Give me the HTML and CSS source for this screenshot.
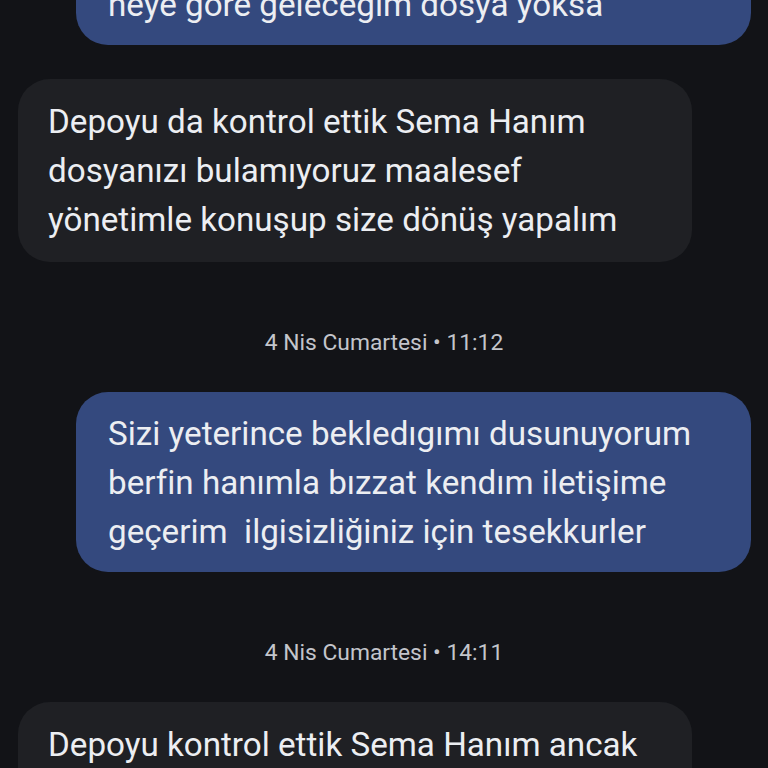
FILE: index.html
```html
<!DOCTYPE html>
<html lang="tr">
<head>
<meta charset="utf-8">
<link rel="stylesheet" href="styles.css">
</head>
<body>
<main class="thread">
  <div class="msg sent top-cut">
    <p class="bubble">neye göre geleceğim dosya yoksa</p>
  </div>
  <div class="msg received">
    <p class="bubble">Depoyu da kontrol ettik Sema Hanım<br>dosyanızı bulamıyoruz maalesef<br>yönetimle konuşup size dönüş yapalım</p>
  </div>
  <div class="stamp">4 Nis Cumartesi • 11:12</div>
  <div class="msg sent">
    <p class="bubble">Sizi yeterince bekledıgımı dusunuyorum<br>berfin hanımla bızzat kendım iletişime<br>geçerim&nbsp; ilgisizliğiniz için tesekkurler</p>
  </div>
  <div class="stamp">4 Nis Cumartesi • 14:11</div>
  <div class="msg received">
    <p class="bubble">Depoyu kontrol ettik Sema Hanım ancak<br>dosyanızı bulamadık</p>
  </div>
</main>
</body>
</html>
```

FILE: styles.css
```css
html, body {
  margin: 0;
  padding: 0;
  background: #121317;
  overflow: hidden;
  height: 768px;
}

.thread {
  display: flex;
  flex-direction: column;
  font-family: Roboto, "Noto Sans", "Liberation Sans", sans-serif;
  color: #eceef2;
  margin-top: -37px;
}

.msg {
  display: flex;
}

.msg.sent {
  justify-content: flex-end;
  padding-right: 17px;
}

.msg.received {
  justify-content: flex-start;
  padding-left: 18px;
}

.top-cut + .msg.received {
  margin-top: 34px;
}

.bubble {
  margin: 0;
  font-size: 33.2px;
  line-height: 49px;
  border-radius: 32px;
  white-space: nowrap;
}

.sent .bubble {
  background: #34497e;
  width: 611px;
  padding: 17px 32px 16px 32px;
}

.received .bubble {
  background: #1f2024;
  width: 614px;
  padding: 18px 30px 18px 30px;
}

.stamp {
  text-align: center;
  font-size: 22.8px;
  line-height: 28px;
  color: #c3c5cb;
  margin-top: 67px;
  margin-bottom: 35px;
}
```
